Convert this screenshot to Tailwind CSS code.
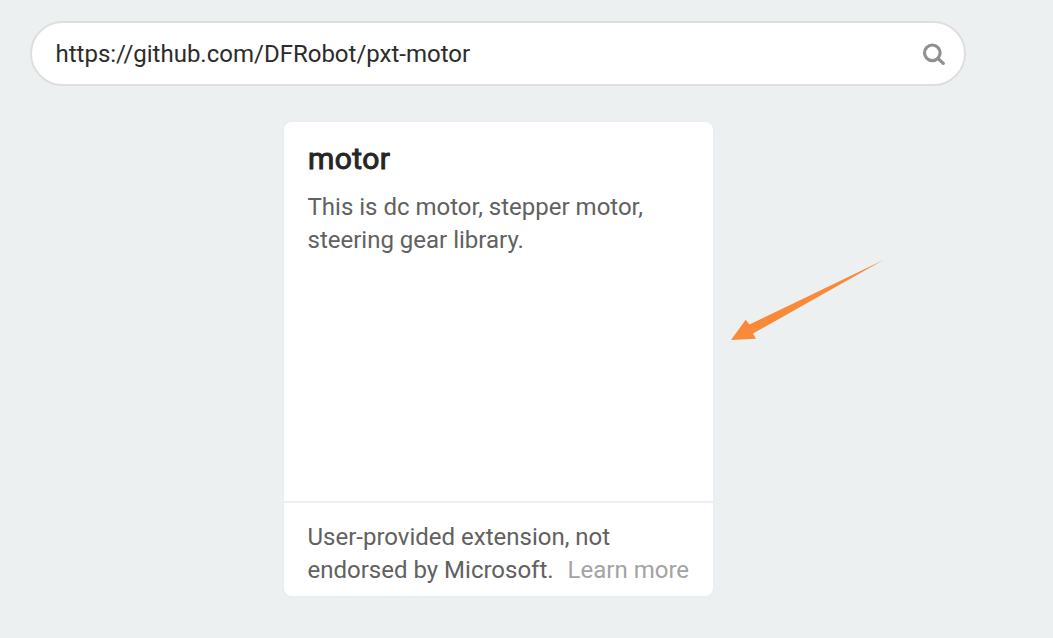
<!DOCTYPE html>
<html lang="en"><head><meta charset="utf-8"><title>Extensions</title>
<script src="https://cdn.jsdelivr.net/npm/@tailwindcss/browser@4"></script></head>
<body class="relative h-[638px] overflow-hidden bg-[#ecf0f1] font-['Roboto',sans-serif] pt-[21px]">
<div class="ml-[30px] flex h-[65px] w-[936px] items-center justify-between rounded-full border-2 border-[#dededf] bg-white pl-[23.5px] pr-[18px]">
<span class="text-[24px] leading-[32px] text-[#2c2c2c]">https://github.com/DFRobot/pxt-motor</span>
<svg class="size-6" viewBox="0 0 24 24" fill="none" stroke="#919191" stroke-width="3.2" stroke-linecap="round"><circle cx="10.3" cy="10.8" r="7.8"/><path d="M16 16.500l5.300 4.900"/></svg>
</div>
<main class="ml-[284px] mt-9 flex h-[474px] w-[429px] flex-col rounded-lg bg-white shadow-[0_0_0_2px_#e9eef2]">
<div class="flex-1 px-[23.5px] pt-[21px]">
<h1 class="pl-[0.5px] text-[30px] font-normal leading-8 tracking-[0.4px] text-[#262626] [-webkit-text-stroke:1px_#262626]">motor</h1>
<p class="mt-4 whitespace-nowrap text-[24px] leading-[33px] text-[#616161]">This is dc motor, stepper motor,<br>steering gear library.</p>
</div>
<footer class="h-[95px] whitespace-nowrap border-t-2 border-[#eeeff1] px-[23.5px] pt-[18px] text-[24px] leading-[33px] text-[#616161]">User-provided extension, not<br>endorsed by Microsoft. <a class="ml-2 text-[#a3a3a3]">Learn more</a></footer>
</main>
<svg class="absolute left-[720px] top-[250px] h-[100px] w-[180px]" viewBox="0 0 180 100"><path fill="#f98a3a" d="M163.500 10L29.500 74.500l-3.800-4.700L11 90l25-1.300-3-5.200z"/></svg>
</body></html>
